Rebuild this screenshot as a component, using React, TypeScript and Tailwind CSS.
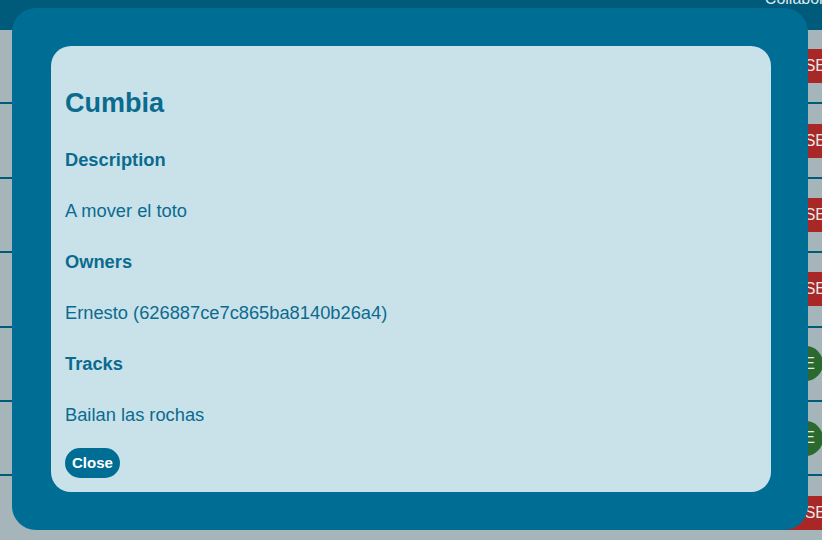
import React from 'react';

const rows = [
  { label: 'CLOSE', kind: 'red' },
  { label: 'CLOSE', kind: 'red' },
  { label: 'CLOSE', kind: 'red' },
  { label: 'CLOSE', kind: 'red' },
  { label: 'ACTIVE', kind: 'green' },
  { label: 'ACTIVE', kind: 'green' },
  { label: 'CLOSE', kind: 'red' },
];

const App: React.FC = () => {
  return (
    <div className="relative w-[822px] h-[540px] overflow-hidden bg-[#a6b5ba] font-['Liberation_Sans',Arial,sans-serif]">
      {/* Header bar */}
      <header className="h-[30px] bg-[#005a7a] flex justify-end overflow-hidden">
        <span className="-mt-[9px] -mr-[38px] text-[16px] leading-[16px] text-[#dbe8ee] whitespace-nowrap">
          Collaborators
        </span>
      </header>

      {/* Playlist rows */}
      <div className="flex flex-col">
        {rows.map((row, i) => (
          <div
            key={i}
            className="h-[74.4px] border-b-2 border-[#005a7a] flex items-center justify-end"
          >
            {row.kind === 'red' ? (
              <button className="h-[34px] -mr-[44px] pl-[14px] pr-[40px] bg-[#a82828] text-[#e6e6e6] text-[16px] uppercase">
                {row.label}
              </button>
            ) : (
              <button className="h-[35px] -mr-[1px] pl-[16px] pr-[8px] rounded-full bg-[#2a6a2e] text-[#e6e6e6] text-[16px]">
                {row.label}
              </button>
            )}
          </div>
        ))}
      </div>

      {/* Modal */}
      <div className="absolute left-[12px] top-[8px] w-[796px] h-[522px] rounded-[24px] bg-[#006d94] pl-[39px] pr-[37px] py-[38px]">
        <div className="h-full rounded-[20px] bg-[#c9e2ea] pl-[14px] pt-[44px] pb-[15px] flex flex-col text-[#0b6b8f]">
          <h2 className="text-[27px] leading-[27px] font-bold">Cumbia</h2>
          <div className="mt-[34px] flex flex-col gap-[33.1px] text-[18.3px] leading-[18px]">
            <h4 className="font-bold">Description</h4>
            <p>A mover el toto</p>
            <h4 className="font-bold">Owners</h4>
            <p>Ernesto (626887ce7c865ba8140b26a4)</p>
            <h4 className="font-bold">Tracks</h4>
            <p>Bailan las rochas</p>
          </div>
          <div className="mt-[24px]">
            <button className="h-[30px] px-[7px] rounded-full bg-[#006d94] text-white text-[15px] font-bold">
              Close
            </button>
          </div>
        </div>
      </div>
    </div>
  );
};

export default App;
